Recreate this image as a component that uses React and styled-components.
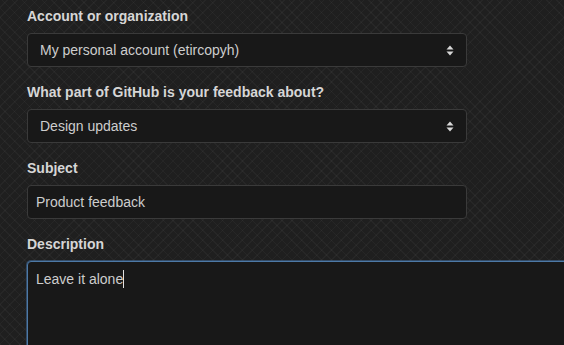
import React from "react";
import styled, { createGlobalStyle } from "styled-components";

const Global = createGlobalStyle`
  html, body {
    margin: 0;
    padding: 0;
    overflow: hidden;
    width: 564px;
    height: 345px;
  }
  body {
    background-color: #1f1f1f;
    background-image:
      repeating-linear-gradient(45deg, rgba(255,255,255,0.03) 0 1px, transparent 1px 7px),
      repeating-linear-gradient(-45deg, rgba(255,255,255,0.03) 0 1px, transparent 1px 7px);
    font-family: "Liberation Sans", Arial, sans-serif;
  }
`;

const Form = styled.div`
  display: flex;
  flex-direction: column;
  padding: 6px 0 0 27px;
  gap: 15px;
`;

const Field = styled.div`
  display: flex;
  flex-direction: column;
  gap: 7px;
`;

const Label = styled.label`
  font-size: 14px;
  line-height: 20px;
  font-weight: 700;
  color: #d6d6d6;
`;

const Box = styled.div`
  box-sizing: border-box;
  width: ${(p) => p.$w || 440}px;
  height: ${(p) => p.$h || 34}px;
  display: flex;
  align-items: ${(p) => (p.$multi ? "flex-start" : "center")};
  justify-content: space-between;
  padding: ${(p) => (p.$select ? "0 12px 0 12px" : p.$multi ? "7px 8px" : "0 8px")};
  background: #181818;
  border: 1px solid ${(p) => (p.$focus ? "#4d79a6" : "#3a3a3a")};
  box-shadow: ${(p) => (p.$focus ? "0 0 0 1px rgba(66,110,158,0.55)" : "none")};
  border-radius: 4px;
  color: #cdcdcd;
  font-size: 14px;
  line-height: 20px;
`;

const Caret = styled.span`
  display: inline-block;
  width: 1px;
  height: 18px;
  background: #e0e0e0;
  vertical-align: -4px;
`;

const Arrows = () => (
  <svg width="8" height="11" viewBox="0 0 8 11" aria-hidden="true">
    <path d="M4 0.5 L7.5 4.5 L0.5 4.5 Z" fill="#d8d8d8" />
    <path d="M4 10.5 L7.5 6.5 L0.5 6.5 Z" fill="#d8d8d8" />
  </svg>
);

export default function App() {
  return (
    <>
      <Global />
      <Form>
        <Field>
          <Label>Account or organization</Label>
          <Box $select>
            <span>My personal account (etircopyh)</span>
            <Arrows />
          </Box>
        </Field>
        <Field>
          <Label>What part of GitHub is your feedback about?</Label>
          <Box $select>
            <span>Design updates</span>
            <Arrows />
          </Box>
        </Field>
        <Field>
          <Label>Subject</Label>
          <Box>
            <span>Product feedback</span>
          </Box>
        </Field>
        <Field>
          <Label>Description</Label>
          <Box $multi $focus $w={600} $h={140}>
            <span>
              Leave it alone
              <Caret />
            </span>
          </Box>
        </Field>
      </Form>
    </>
  );
}
